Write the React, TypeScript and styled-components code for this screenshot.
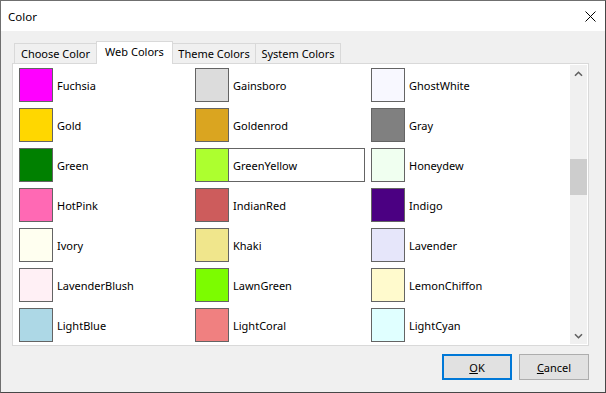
import React from 'react';
import styled, { createGlobalStyle } from 'styled-components';

const GlobalStyle = createGlobalStyle`
  html, body {
    margin: 0;
    padding: 0;
    background: #ffffff;
  }
  * {
    box-sizing: border-box;
  }
`;

const colors: [string, string][] = [
  ['Fuchsia', '#FF00FF'],
  ['Gainsboro', '#DCDCDC'],
  ['GhostWhite', '#F8F8FF'],
  ['Gold', '#FFD700'],
  ['Goldenrod', '#DAA520'],
  ['Gray', '#808080'],
  ['Green', '#008000'],
  ['GreenYellow', '#ADFF2F'],
  ['Honeydew', '#F0FFF0'],
  ['HotPink', '#FF69B4'],
  ['IndianRed', '#CD5C5C'],
  ['Indigo', '#4B0082'],
  ['Ivory', '#FFFFF0'],
  ['Khaki', '#F0E68C'],
  ['Lavender', '#E6E6FA'],
  ['LavenderBlush', '#FFF0F5'],
  ['LawnGreen', '#7CFC00'],
  ['LemonChiffon', '#FFFACD'],
  ['LightBlue', '#ADD8E6'],
  ['LightCoral', '#F08080'],
  ['LightCyan', '#E0FFFF'],
];

const tabs = [
  { label: 'Choose Color', width: 83 },
  { label: 'Web Colors', width: 77 },
  { label: 'Theme Colors', width: 84 },
  { label: 'System Colors', width: 86 },
];

const Window = styled.div`
  width: 606px;
  height: 393px;
  display: flex;
  flex-direction: column;
  background: #f0f0f0;
  border: 1px solid #6f6f6f;
  border-right-color: #474747;
  border-bottom-color: #474747;
  font-family: 'Noto Sans', 'Liberation Sans', sans-serif;
  font-size: 11px;
  color: #000000;
`;

const TitleBar = styled.div`
  height: 30px;
  background: #ffffff;
  display: flex;
  align-items: center;
  justify-content: space-between;
  padding-left: 7px;
  font-size: 11.5px;
`;

const CloseButton = styled.div`
  width: 46px;
  height: 30px;
  display: flex;
  align-items: center;
  justify-content: center;
  padding-left: 16px;
`;

const Body = styled.div`
  flex: 1;
  display: flex;
  flex-direction: column;
  padding: 10px 16px 0 11px;
`;

const TabStrip = styled.div`
  display: flex;
  align-items: flex-end;
  height: 22px;
  padding-left: 3px;
`;

const Tab = styled.div<{ $active?: boolean; $w: number }>`
  width: ${(p) => p.$w}px;
  height: ${(p) => (p.$active ? 23 : 20)}px;
  margin-bottom: ${(p) => (p.$active ? -1 : 0)}px;
  display: flex;
  align-items: center;
  justify-content: center;
  padding-bottom: ${(p) => (p.$active ? 3 : 0)}px;
  background: ${(p) => (p.$active ? '#ffffff' : '#f0f0f0')};
  border: 1px solid #d9d9d9;
  border-bottom: none;
  margin-left: -1px;
  position: relative;
  z-index: ${(p) => (p.$active ? 2 : 1)};
  white-space: nowrap;
`;

const Panel = styled.div`
  width: 577px;
  height: 283px;
  background: #ffffff;
  border: 1px solid #d9d9d9;
  padding: 1px;
  display: flex;
`;

const Grid = styled.div`
  flex: 1;
  overflow: hidden;
  display: grid;
  grid-template-columns: repeat(3, 170px);
  grid-auto-rows: 34px;
  column-gap: 6px;
  row-gap: 6px;
  padding: 3px 0 0 5px;
  align-content: start;
`;

const Item = styled.div<{ $selected?: boolean }>`
  display: flex;
  align-items: center;
  gap: 4px;
  box-shadow: ${(p) => (p.$selected ? 'inset 0 0 0 1px #646464' : 'none')};
`;

const Swatch = styled.div<{ $color: string }>`
  width: 34px;
  height: 34px;
  flex: none;
  background: ${(p) => p.$color};
  border: 1px solid #646464;
`;

const Label = styled.span`
  white-space: nowrap;
`;

const ScrollBar = styled.div`
  width: 17px;
  background: #f0f0f0;
  display: flex;
  flex-direction: column;
`;

const ArrowBox = styled.div`
  height: 17px;
  display: flex;
  align-items: center;
  justify-content: center;
`;

const Track = styled.div`
  flex: 1;
  padding-top: 77px;
`;

const Thumb = styled.div`
  height: 36px;
  background: #cdcdcd;
`;

const ButtonRow = styled.div`
  display: flex;
  justify-content: flex-end;
  gap: 7px;
  margin-top: 8px;
`;

const Button = styled.div<{ $default?: boolean }>`
  width: 70px;
  height: 26px;
  display: flex;
  align-items: center;
  justify-content: center;
  background: #e1e1e1;
  border: ${(p) => (p.$default ? '2px solid #0078d7' : '1px solid #adadad')};
`;

const Chevron = ({ down }: { down?: boolean }) => (
  <svg width="9" height="6" viewBox="0 0 9 6">
    <path
      d={down ? 'M1 1.2 L4.5 4.7 L8 1.2' : 'M1 4.8 L4.5 1.3 L8 4.8'}
      fill="none"
      stroke="#606060"
      strokeWidth="1.6"
    />
  </svg>
);

const App = () => {
  return (
    <>
      <GlobalStyle />
      <Window>
        <TitleBar>
          <span>Color</span>
          <CloseButton>
            <svg width="11" height="11" viewBox="0 0 11 11">
              <path d="M0.5 0.5 L10.5 10.5 M10.5 0.5 L0.5 10.5" stroke="#000" strokeWidth="1" />
            </svg>
          </CloseButton>
        </TitleBar>
        <Body>
          <TabStrip>
            {tabs.map((t) => (
              <Tab key={t.label} $w={t.width} $active={t.label === 'Web Colors'}>
                {t.label}
              </Tab>
            ))}
          </TabStrip>
          <Panel>
            <Grid>
              {colors.map(([name, hex]) => (
                <Item key={name} $selected={name === 'GreenYellow'}>
                  <Swatch $color={hex} />
                  <Label>{name}</Label>
                </Item>
              ))}
            </Grid>
            <ScrollBar>
              <ArrowBox>
                <Chevron />
              </ArrowBox>
              <Track>
                <Thumb />
              </Track>
              <ArrowBox>
                <Chevron down />
              </ArrowBox>
            </ScrollBar>
          </Panel>
          <ButtonRow>
            <Button $default>
              <span><u>O</u>K</span>
            </Button>
            <Button>
              <span><u>C</u>ancel</span>
            </Button>
          </ButtonRow>
        </Body>
      </Window>
    </>
  );
};

export default App;
